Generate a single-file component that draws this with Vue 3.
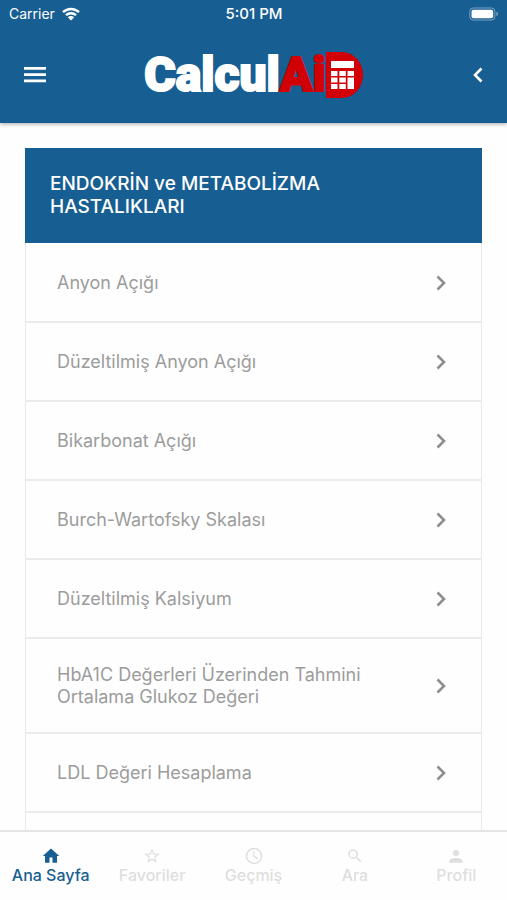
<template>
  <div class="app">
    <header class="header">
      <div class="status-bar">
        <div class="carrier">
          <span>Carrier</span>
          <svg class="wifi" viewBox="0 0 18 14" aria-hidden="true">
            <path d="M1 5.2a11.5 11.5 0 0 1 16 0" />
            <path d="M4 8.2a7.2 7.2 0 0 1 10 0" />
            <path class="dot" d="M9 13.4 5.8 10.2a4.6 4.6 0 0 1 6.4 0z" />
          </svg>
        </div>
        <span class="time">5:01 PM</span>
        <div class="battery-wrap">
          <svg class="battery" viewBox="0 0 31 14" aria-hidden="true">
            <rect x="0.8" y="0.8" width="26" height="12.4" rx="3.6" fill="none" stroke="#fff" stroke-opacity="0.45" />
            <rect x="2.6" y="2.6" width="22.4" height="8.8" rx="2" fill="#fff" />
            <path d="M28.4 4.8c2 .7 2 3.7 0 4.4z" fill="#fff" fill-opacity="0.5" />
          </svg>
        </div>
      </div>

      <div class="nav-bar">
        <button class="icon-btn" type="button" aria-label="Menü">
          <svg width="22" height="16" viewBox="0 0 22 16">
            <path d="M0 0h22v2.8H0zM0 6.2h22V9H0zM0 12.4h22v2.800H0z" fill="#fff" />
          </svg>
        </button>
        <div class="logo">
          <span class="logo-calcul">Calcul</span><span class="logo-ai">Ai</span>
          <svg class="logo-badge" viewBox="0 0 37 46" aria-hidden="true">
            <path d="M0 0h16a21 23 0 0 1 0 46H0z" fill="#d10006" />
            <g fill="#fff">
              <rect x="5" y="9" width="23" height="7" />
              <rect x="5" y="19" width="6.5" height="5" />
              <rect x="13.3" y="19" width="6.5" height="5" />
              <rect x="21.5" y="19" width="6.5" height="5" />
              <rect x="5" y="25.5" width="6.5" height="5" />
              <rect x="13.3" y="25.5" width="6.5" height="5" />
              <rect x="5" y="32" width="6.5" height="5" />
              <rect x="13.3" y="32" width="6.5" height="5" />
              <rect x="21.5" y="25.5" width="6.5" height="11.5" />
            </g>
          </svg>
        </div>
        <button class="icon-btn back" type="button" aria-label="Geri">
          <svg width="10" height="16" viewBox="0 0 10 16">
            <path d="M8.5 1.5 2 8l6.5 6.5" fill="none" stroke="#fff" stroke-width="2.6" />
          </svg>
        </button>
      </div>
    </header>

    <main class="content">
      <section class="card">
        <h1 class="card-title">ENDOKRİN ve METABOLİZMA HASTALIKLARI</h1>
        <ul class="list">
          <li v-for="item in items" :key="item">
            <a href="#" class="row" @click.prevent>
              <span class="row-label">{{ item }}</span>
              <svg class="chevron" width="10" height="16" viewBox="0 0 10 16" aria-hidden="true">
                <path d="M1.5 1.5 8 8l-6.5 6.5" />
              </svg>
            </a>
          </li>
          <li class="row"></li>
        </ul>
      </section>
    </main>

    <nav class="tab-bar">
      <a
        v-for="tab in tabs"
        :key="tab.label"
        href="#"
        class="tab"
        :class="{ active: tab.label === activeTab }"
        @click.prevent="activeTab = tab.label"
      >
        <svg width="18" height="18" viewBox="0 0 24 24" aria-hidden="true">
          <path :d="tab.icon" />
        </svg>
        <span>{{ tab.label }}</span>
      </a>
    </nav>
  </div>
</template>

<script setup>
import { ref } from 'vue'

const activeTab = ref('Ana Sayfa')

const items = [
  'Anyon Açığı',
  'Düzeltilmiş Anyon Açığı',
  'Bikarbonat Açığı',
  'Burch-Wartofsky Skalası',
  'Düzeltilmiş Kalsiyum',
  'HbA1C Değerleri Üzerinden Tahmini Ortalama Glukoz Değeri',
  'LDL Değeri Hesaplama'
]

const tabs = [
  { label: 'Ana Sayfa', icon: 'M10 21v-7h4v7h6v-9h3L12 2 1 12h3v9z' },
  {
    label: 'Favoriler',
    icon: 'M22 9.24l-7.19-.62L12 2 9.19 8.63 2 9.24l5.46 4.73L5.82 21 12 17.27 18.18 21l-1.63-7.03L22 9.24zM12 15.4l-3.76 2.27 1-4.28-3.32-2.88 4.38-.38L12 6.1l1.71 4.04 4.38.38-3.32 2.88 1 4.28L12 15.4z'
  },
  {
    label: 'Geçmiş',
    icon: 'M12 1a11 11 0 1 0 0 22 11 11 0 0 0 0-22zm0 2a9 9 0 1 1 0 18 9 9 0 0 1 0-18zm-1 3v7l5.5 3.3.9-1.5-4.7-2.8V6z'
  },
  {
    label: 'Ara',
    icon: 'M15.5 14h-.79l-.28-.27A6.47 6.47 0 0 0 16 9.5 6.5 6.5 0 1 0 9.5 16c1.61 0 3.09-.59 4.23-1.57l.27.28v.79l5 4.99L20.49 19l-4.99-5zm-6 0a4.5 4.5 0 1 1 0-9 4.5 4.5 0 0 1 0 9z'
  },
  {
    label: 'Profil',
    icon: 'M12 12a4 4 0 1 0 0-8 4 4 0 0 0 0 8zm0 2.5c-3.5 0-9 1.5-9 4.5v2h18v-2c0-3-5.500-4.500-9-4.500z'
  }
]
</script>

<style>
body {
  margin: 0;
  background: #fff;
}
</style>

<style scoped>
.app {
  display: flex;
  flex-direction: column;
  height: 100vh;
  overflow: hidden;
  font-family: Inter, "Liberation Sans", sans-serif;
  font-optical-sizing: none;
  background: #fefefe;
}

.header {
  flex: none;
  color: #fff;
  background: #175e93;
  box-shadow: 0 1px 4px rgba(0, 0, 0, 0.35);
  z-index: 1;
}

.status-bar {
  display: grid;
  grid-template-columns: 1fr auto 1fr;
  align-items: center;
  height: 27px;
  padding: 0 8px 0 9px;
  font-size: 14px;
}

.carrier {
  display: flex;
  align-items: center;
  gap: 7px;
}

.wifi {
  width: 18px;
  height: 14px;
  fill: none;
  stroke: #fff;
  stroke-width: 2.4;
}

.wifi .dot {
  fill: #fff;
  stroke: none;
}

.time {
  font-size: 15px;
  font-weight: 500;
}

.battery-wrap {
  display: flex;
  justify-content: flex-end;
}

.battery {
  width: 30px;
  height: 14px;
}

.nav-bar {
  display: flex;
  align-items: center;
  justify-content: space-between;
  height: 96px;
  padding: 0 24px;
}

.icon-btn {
  display: flex;
  width: 44px;
  padding: 12px 0;
  border: none;
  background: none;
  cursor: pointer;
}

.icon-btn.back {
  justify-content: flex-end;
}

.logo {
  display: flex;
  align-items: center;
  height: 48px;
  font-family: Roboto, "Liberation Sans", sans-serif;
  font-size: 48px;
  font-weight: 900;
  line-height: 48px;
}

.logo-calcul {
  -webkit-text-stroke: 2px #fff;
}

.logo-ai {
  color: #d10006;
  -webkit-text-stroke: 2px #d10006;
}

.logo-badge {
  width: 37px;
  height: 46px;
}

.content {
  flex: 1;
  min-height: 0;
  padding: 25px 25px 0;
  overflow-y: auto;
  scrollbar-width: none;
}

.card-title {
  margin: 0;
  padding: 24px 100px 25px 25px;
  font-size: 19px;
  font-weight: 500;
  line-height: 23px;
  color: #fff;
  background: #175e93;
}

.list {
  margin: 0;
  padding: 1px 0 0;
  list-style: none;
  border: solid #e8e8e8;
  border-width: 0 1px;
}

.row {
  display: flex;
  align-items: center;
  justify-content: space-between;
  box-sizing: border-box;
  min-height: 79px;
  padding: 25px 35px 24px 31px;
  border-bottom: 2px solid #ebebeb;
  text-decoration: none;
}

.row-label {
  max-width: 330px;
  font-size: 18px;
  line-height: 22px;
  color: #9c9c9c;
}

.chevron {
  flex: none;
  fill: none;
  stroke: #8e8e8e;
  stroke-width: 2.6;
}

.tab-bar {
  display: flex;
  flex: none;
  box-sizing: border-box;
  height: 70px;
  padding-top: 15px;
  border-top: 2px solid #e4e4e4;
  background: #fefefe;
}

.tab {
  display: flex;
  flex: 1;
  flex-direction: column;
  align-items: center;
  font-size: 16px;
  font-weight: 500;
  line-height: 20px;
  color: #dedede;
  text-decoration: none;
}

.tab svg {
  fill: currentColor;
}

.tab.active {
  color: #175e93;
}
</style>
